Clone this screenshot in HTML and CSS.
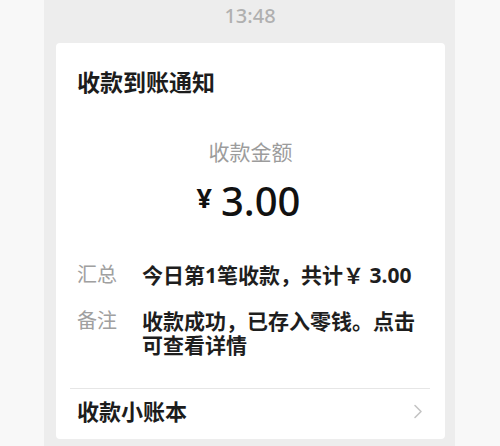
FILE: index.html
```html
<!DOCTYPE html>
<html lang="zh">
<head>
<meta charset="utf-8">
<link rel="stylesheet" href="styles.css">
</head>
<body>
<div class="panel">
  <div class="time">13:48</div>
  <div class="card">
    <div class="title">收款到账通知</div>
    <div class="amount-label">收款金额</div>
    <div class="amount"><span class="yen">¥</span><span class="num">3.00</span></div>
    <div class="rows">
      <div class="label">汇总</div>
      <div class="value">今日第1笔收款，共计￥ 3.00</div>
      <div class="label">备注</div>
      <div class="value">收款成功，已存入零钱。点击可查看详情</div>
    </div>
    <div class="divider"></div>
    <div class="footer">
      <span class="footer-text">收款小账本</span>
      <svg class="chevron" width="10" height="15" viewBox="0 0 10 15"><path d="M2 1.5 L8 7.5 L2 13.5" fill="none" stroke="#c4c4c4" stroke-width="1.6" stroke-linecap="round" stroke-linejoin="round"/></svg>
    </div>
  </div>
</div>
</body>
</html>
```
FILE: styles.css
```css
html, body {
  margin: 0;
  padding: 0;
}
body {
  background: #f8f8f8;
  width: 500px;
  height: 446px;
  overflow: hidden;
  font-family: "Noto Sans", "Noto Sans CJK SC", sans-serif;
}
.panel {
  margin-left: 44px;
  width: 411px;
  height: 446px;
  background: #ededed;
  display: flex;
  flex-direction: column;
}
.time {
  height: 43px;
  line-height: 31px;
  text-align: center;
  font-size: 20px;
  font-weight: 500;
  color: #b0b0b0;
  padding-left: 1px;
}
.card {
  margin: 0 10px 0 12px;
  height: 396px;
  background: #fff;
  border-radius: 4px;
  display: flex;
  flex-direction: column;
}
.title {
  padding: 24px 0 0 21px;
  font-size: 23px;
  line-height: 30px;
  font-weight: 700;
  color: #1c1c1c;
}
.amount-label {
  margin-top: 41px;
  text-align: center;
  font-size: 21px;
  line-height: 28px;
  color: #9c9c9c;
}
.amount {
  margin-top: 10px;
  display: flex;
  justify-content: center;
  align-items: flex-start;
  height: 50px;
  color: #111;
}
.yen {
  font-size: 27px;
  font-weight: 700;
  line-height: 36px;
  margin-right: 9px;
  margin-left: -4px;
  margin-top: 4px;
}
.num {
  font-size: 40px;
  line-height: 50px;
  font-weight: 500;
}
.rows {
  margin-top: 37px;
  padding-left: 21px;
  display: grid;
  grid-template-columns: 65px 281px;
  row-gap: 22px;
  font-size: 21px;
  line-height: 24px;
}
.label {
  color: #a0a0a0;
  font-size: 20px;
}
.value {
  color: #1e1e1e;
  font-weight: 700;
}
.divider {
  margin: 31px 15px 0 14px;
  height: 1px;
  background: #e6e6e6;
}
.footer {
  flex: 1;
  display: flex;
  align-items: center;
  justify-content: space-between;
  padding: 0 22px 6px 21px;
}
.footer-text {
  font-size: 22px;
  line-height: 24px;
  font-weight: 700;
  color: #1c1c1c;
}
.chevron {
  display: block;
}
```
